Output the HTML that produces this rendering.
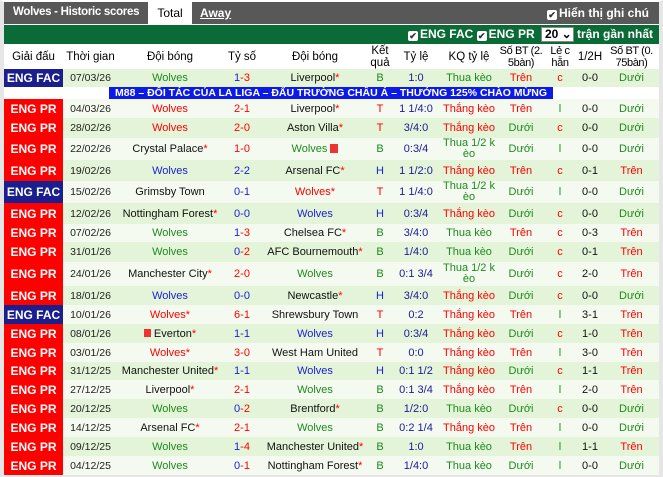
<!DOCTYPE html>
<html><head><meta charset="utf-8"><style>
*{margin:0;padding:0;box-sizing:border-box}
body{width:663px;height:477px;background:#fff;font-family:"Liberation Sans",Arial,sans-serif;font-size:11px;position:relative;overflow:hidden}
#frame{position:absolute;left:0;top:0;width:663px;height:477px;border:4px solid #e6e6e6;border-top:2px solid #fff}
#top{position:absolute;left:4px;top:2px;width:655px;height:22px;background:#585858;color:#fff;font-weight:bold;font-size:12px;white-space:nowrap}
#top .tt{position:absolute;left:9px;top:4px;font-size:11.5px;letter-spacing:-0.3px}
#top .tab{position:absolute;left:144px;top:0;width:44px;height:23px;background:#fff;color:#000;font-weight:normal;text-align:center;line-height:22px}
#top .aw{position:absolute;left:196px;top:4px;text-decoration:underline}
#top .rt{position:absolute;right:10px;top:4px;color:#fff}
.cb{display:inline-block;width:10px;height:10px;background:#fff;color:#333;font-size:9px;line-height:10px;text-align:center;vertical-align:-1px;margin-right:2px;border-radius:2px;font-weight:bold}
#green{position:absolute;left:4px;top:25px;width:655px;height:19px;background:#0b6b36;color:#fff;font-weight:bold;font-size:12px;text-align:right;padding-right:6px;line-height:19px;white-space:nowrap}
.sel{display:inline-block;background:#fff;color:#000;width:33px;height:15px;line-height:13px;border:1px solid #888;text-align:left;padding-left:3px;vertical-align:0;margin:0 3px;font-size:12px}
table{position:absolute;left:4px;top:44px;width:655px;border-collapse:collapse;table-layout:fixed}
td{text-align:center;padding:0;overflow:hidden;white-space:nowrap;line-height:12px}
tr.h td{height:25px;line-height:12px;color:#000;font-size:11.5px}
tr.h td.sm{font-size:11px;letter-spacing:-0.4px}
td.lg{color:#fff;font-weight:bold;font-size:12px}
.fac{background:#1b1f8e}.pr{background:#f00}
.d{font-size:10.5px;color:#222}
.g{color:#1e8a1e}.r{color:#f00}.b{color:#1c1cd8}.k{color:#111}.n{color:#1a1a9a}
.s{color:#f00}
tr.a td:not(.lg){background:#e4f4d8}
tr.w td:not(.lg){background:#f4faef}
.wr{line-height:11px!important}
.ban td{height:12px;background:#fff}
.ban span{display:block;margin-left:105px;width:444px;background:#0b1ae6;color:#fff;font-weight:bold;font-size:10.5px;line-height:12px;height:12px;text-align:center;white-space:nowrap;overflow:hidden}
</style></head><body>
<div id="frame"></div>
<div id="top"><span class="tt">Wolves - Historic scores</span><span class="tab">Total</span><span class="aw">Away</span><span class="rt"><span class="cb">✔</span>Hiển thị ghi chú</span></div>
<div id="green"><span class="cb">✔</span>ENG FAC <span class="cb">✔</span>ENG PR <span class="sel">20 ⌄</span>trận gần nhất</div>
<table>
<colgroup><col width="59"><col width="55"><col width="104"><col width="40"><col width="106"><col width="24"><col width="48"><col width="58"><col width="46"><col width="32"><col width="28"><col width="55"></colgroup>
<tr class="h"><td>Giải đấu</td><td>Thời gian</td><td>Đội bóng</td><td>Tỷ số</td><td>Đội bóng</td><td>Kết<br>quả</td><td>Tỷ lệ</td><td>KQ tỷ lệ</td><td class="sm">Số BT (2.<br>5bàn)</td><td class="sm">Lẻ c<br>hẵn</td><td>1/2H</td><td class="sm">Số BT (0.<br>75bàn)</td></tr>
<tr class="a" style="height:18px"><td class="lg fac">ENG FAC</td><td class="d">07/03/26</td><td class="g">Wolves</td><td><span class="b">1</span><span class="r">-3</span></td><td class="k">Liverpool<span class="s">*</span></td><td class="g">B</td><td class="n">1:0</td><td class="g">Thua kèo</td><td class="r">Trên</td><td class="r">c</td><td class="k">0-0</td><td class="g">Dưới</td></tr>
<tr class="ban"><td colspan="12" style="text-align:left"><span>M88 – ĐỐI TÁC CỦA LA LIGA – ĐẤU TRƯỜNG CHÂU Á – THƯỞNG 125% CHÀO MỪNG</span></td></tr>
<tr class="w" style="height:19px"><td class="lg pr">ENG PR</td><td class="d">04/03/26</td><td class="r">Wolves</td><td class="r">2-1</td><td class="k">Liverpool<span class="s">*</span></td><td class="r">T</td><td class="n">1 1/4:0</td><td class="r">Thắng kèo</td><td class="r">Trên</td><td class="g">l</td><td class="k">0-0</td><td class="g">Dưới</td></tr>
<tr class="a" style="height:20px"><td class="lg pr">ENG PR</td><td class="d">28/02/26</td><td class="r">Wolves</td><td class="r">2-0</td><td class="k">Aston Villa<span class="s">*</span></td><td class="r">T</td><td class="n">3/4:0</td><td class="r">Thắng kèo</td><td class="g">Dưới</td><td class="r">c</td><td class="k">0-0</td><td class="g">Dưới</td></tr>
<tr class="w" style="height:22px"><td class="lg pr">ENG PR</td><td class="d">22/02/26</td><td class="k">Crystal Palace<span class="s">*</span></td><td class="r">1-0</td><td class="g">Wolves <span style="display:inline-block;width:8px;height:9px;background:#e33;vertical-align:-1px"></span></td><td class="g">B</td><td class="n">0:3/4</td><td class="g wr">Thua 1/2 k<br>èo</td><td class="g">Dưới</td><td class="g">l</td><td class="k">0-0</td><td class="g">Dưới</td></tr>
<tr class="a" style="height:21px"><td class="lg pr">ENG PR</td><td class="d">19/02/26</td><td class="b">Wolves</td><td class="b">2-2</td><td class="k">Arsenal FC<span class="s">*</span></td><td class="b">H</td><td class="n">1 1/2:0</td><td class="r">Thắng kèo</td><td class="r">Trên</td><td class="r">c</td><td class="k">0-1</td><td class="r">Trên</td></tr>
<tr class="w" style="height:21px"><td class="lg fac">ENG FAC</td><td class="d">15/02/26</td><td class="k">Grimsby Town</td><td class="b">0-1</td><td class="r">Wolves<span class="s">*</span></td><td class="r">T</td><td class="n">1 1/4:0</td><td class="g wr">Thua 1/2 k<br>èo</td><td class="g">Dưới</td><td class="g">l</td><td class="k">0-0</td><td class="g">Dưới</td></tr>
<tr class="a" style="height:21px"><td class="lg pr">ENG PR</td><td class="d">12/02/26</td><td class="k">Nottingham Forest<span class="s">*</span></td><td class="b">0-0</td><td class="b">Wolves</td><td class="b">H</td><td class="n">0:3/4</td><td class="r">Thắng kèo</td><td class="g">Dưới</td><td class="r">c</td><td class="k">0-0</td><td class="g">Dưới</td></tr>
<tr class="w" style="height:18px"><td class="lg pr">ENG PR</td><td class="d">07/02/26</td><td class="g">Wolves</td><td><span class="b">1</span><span class="r">-3</span></td><td class="k">Chelsea FC<span class="s">*</span></td><td class="g">B</td><td class="n">3/4:0</td><td class="g">Thua kèo</td><td class="r">Trên</td><td class="r">c</td><td class="k">0-3</td><td class="r">Trên</td></tr>
<tr class="a" style="height:20px"><td class="lg pr">ENG PR</td><td class="d">31/01/26</td><td class="g">Wolves</td><td><span class="b">0</span><span class="r">-2</span></td><td class="k">AFC Bournemouth<span class="s">*</span></td><td class="g">B</td><td class="n">1/4:0</td><td class="g">Thua kèo</td><td class="g">Dưới</td><td class="r">c</td><td class="k">0-1</td><td class="r">Trên</td></tr>
<tr class="w" style="height:24px"><td class="lg pr">ENG PR</td><td class="d">24/01/26</td><td class="k">Manchester City<span class="s">*</span></td><td class="r">2-0</td><td class="g">Wolves</td><td class="g">B</td><td class="n">0:1 3/4</td><td class="g wr">Thua 1/2 k<br>èo</td><td class="g">Dưới</td><td class="r">c</td><td class="k">2-0</td><td class="r">Trên</td></tr>
<tr class="a" style="height:19px"><td class="lg pr">ENG PR</td><td class="d">18/01/26</td><td class="b">Wolves</td><td class="b">0-0</td><td class="k">Newcastle<span class="s">*</span></td><td class="b">H</td><td class="n">3/4:0</td><td class="r">Thắng kèo</td><td class="g">Dưới</td><td class="r">c</td><td class="k">0-0</td><td class="g">Dưới</td></tr>
<tr class="w" style="height:19px"><td class="lg fac">ENG FAC</td><td class="d">10/01/26</td><td class="r">Wolves<span class="s">*</span></td><td class="r">6-1</td><td class="k">Shrewsbury Town</td><td class="r">T</td><td class="n">0:2</td><td class="r">Thắng kèo</td><td class="r">Trên</td><td class="g">l</td><td class="k">3-1</td><td class="r">Trên</td></tr>
<tr class="a" style="height:19px"><td class="lg pr">ENG PR</td><td class="d">08/01/26</td><td class="k"><span style="display:inline-block;width:7px;height:8px;background:#e33;vertical-align:0"></span> Everton<span class="s">*</span></td><td class="b">1-1</td><td class="b">Wolves</td><td class="b">H</td><td class="n">0:3/4</td><td class="r">Thắng kèo</td><td class="g">Dưới</td><td class="r">c</td><td class="k">1-0</td><td class="r">Trên</td></tr>
<tr class="w" style="height:19px"><td class="lg pr">ENG PR</td><td class="d">03/01/26</td><td class="r">Wolves<span class="s">*</span></td><td class="r">3-0</td><td class="k">West Ham United</td><td class="r">T</td><td class="n">0:0</td><td class="r">Thắng kèo</td><td class="r">Trên</td><td class="g">l</td><td class="k">3-0</td><td class="r">Trên</td></tr>
<tr class="a" style="height:18px"><td class="lg pr">ENG PR</td><td class="d">31/12/25</td><td class="k">Manchester United<span class="s">*</span></td><td class="b">1-1</td><td class="b">Wolves</td><td class="b">H</td><td class="n">0:1 1/2</td><td class="r">Thắng kèo</td><td class="g">Dưới</td><td class="r">c</td><td class="k">1-1</td><td class="r">Trên</td></tr>
<tr class="w" style="height:19px"><td class="lg pr">ENG PR</td><td class="d">27/12/25</td><td class="k">Liverpool<span class="s">*</span></td><td class="r">2-1</td><td class="g">Wolves</td><td class="g">B</td><td class="n">0:1 3/4</td><td class="r">Thắng kèo</td><td class="r">Trên</td><td class="g">l</td><td class="k">2-0</td><td class="r">Trên</td></tr>
<tr class="a" style="height:19px"><td class="lg pr">ENG PR</td><td class="d">20/12/25</td><td class="g">Wolves</td><td><span class="b">0</span><span class="r">-2</span></td><td class="k">Brentford<span class="s">*</span></td><td class="g">B</td><td class="n">1/2:0</td><td class="g">Thua kèo</td><td class="g">Dưới</td><td class="r">c</td><td class="k">0-0</td><td class="g">Dưới</td></tr>
<tr class="w" style="height:19px"><td class="lg pr">ENG PR</td><td class="d">14/12/25</td><td class="k">Arsenal FC<span class="s">*</span></td><td class="r">2-1</td><td class="g">Wolves</td><td class="g">B</td><td class="n">0:2 1/4</td><td class="r">Thắng kèo</td><td class="r">Trên</td><td class="g">l</td><td class="k">0-0</td><td class="g">Dưới</td></tr>
<tr class="a" style="height:19px"><td class="lg pr">ENG PR</td><td class="d">09/12/25</td><td class="g">Wolves</td><td><span class="b">1</span><span class="r">-4</span></td><td class="k">Manchester United<span class="s">*</span></td><td class="g">B</td><td class="n">1:0</td><td class="g">Thua kèo</td><td class="r">Trên</td><td class="g">l</td><td class="k">1-1</td><td class="r">Trên</td></tr>
<tr class="w" style="height:19px"><td class="lg pr">ENG PR</td><td class="d">04/12/25</td><td class="g">Wolves</td><td><span class="b">0</span><span class="r">-1</span></td><td class="k">Nottingham Forest<span class="s">*</span></td><td class="g">B</td><td class="n">1/4:0</td><td class="g">Thua kèo</td><td class="g">Dưới</td><td class="g">l</td><td class="k">0-0</td><td class="g">Dưới</td></tr>
</table>
</body></html>
